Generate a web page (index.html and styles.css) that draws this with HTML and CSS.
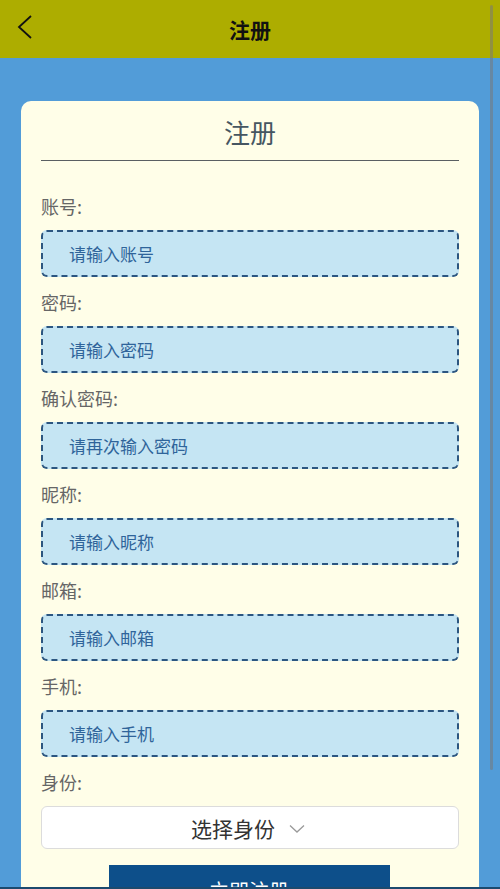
FILE: index.html
```html
<!DOCTYPE html>
<html lang="zh-CN">
<head>
<meta charset="utf-8">
<title>注册</title>
<link rel="stylesheet" href="styles.css">
</head>
<body>
<div class="page">
  <header class="topbar">
    <svg class="back" width="16" height="24" viewBox="0 0 16 24"><path d="M14 1 L2 12 L14 23" fill="none" stroke="#111" stroke-width="1.8" stroke-linejoin="miter"/></svg>
    <h1 class="topbar-title">注册</h1>
  </header>
  <main class="content">
    <section class="card">
      <h2 class="card-title">注册</h2>
      <form class="form">
        <div class="field"><label class="label">账号:</label><div class="input">请输入账号</div></div>
        <div class="field"><label class="label">密码:</label><div class="input">请输入密码</div></div>
        <div class="field"><label class="label">确认密码:</label><div class="input">请再次输入密码</div></div>
        <div class="field"><label class="label">昵称:</label><div class="input">请输入昵称</div></div>
        <div class="field"><label class="label">邮箱:</label><div class="input">请输入邮箱</div></div>
        <div class="field"><label class="label">手机:</label><div class="input">请输入手机</div></div>
        <div class="field field-last"><label class="label">身份:</label>
          <div class="select"><span>选择身份</span>
            <svg class="chev" width="16" height="10" viewBox="0 0 16 10"><path d="M1 1.5 L8 8 L15 1.5" fill="none" stroke="#9a9a9a" stroke-width="1.3"/></svg>
          </div>
        </div>
        <div class="btn-row"><div class="btn">立即注册</div></div>
      </form>
    </section>
  </main>
  <div class="scroll-ind"></div>
  <div class="bottom-line"></div>
</div>
</body>
</html>
```
FILE: styles.css
```css
html, body {
  margin: 0;
  padding: 0;
  height: 100%;
  overflow: hidden;
}
body {
  background: #529cd8;
  font-family: "Noto Sans CJK SC", "Noto Sans", sans-serif;
}
.page {
  position: relative;
  height: 889px;
  overflow: hidden;
}
.topbar {
  height: 58px;
  background: #adad00;
  display: flex;
  align-items: center;
  justify-content: center;
  position: relative;
}
.back {
  position: absolute;
  left: 17px;
  top: 15px;
}
.topbar-title {
  margin: 0;
  font-size: 21px;
  font-weight: 700;
  color: #111;
  line-height: 58px;
}
.content {
  padding: 43px 21px 0 21px;
}
.card {
  background: #fffee8;
  border-radius: 10px;
  padding: 14px 20px 20px 20px;
}
.card-title {
  margin: 0;
  font-size: 26px;
  font-weight: 400;
  color: #465661;
  text-align: center;
  line-height: 34px;
  padding-bottom: 11px;
  border-bottom: 1px solid #5a5f62;
}
.form {
  margin: 0;
  padding-top: 33px;
  display: flex;
  flex-direction: column;
}
.field {
  display: flex;
  flex-direction: column;
  gap: 12px;
  margin-bottom: 13px;
}
.field-last {
  gap: 12px;
  margin-bottom: 16px;
}
.label {
  font-size: 18px;
  line-height: 24px;
  color: #666666;
}
.input {
  height: 43px;
  border: 2px dashed #2c5680;
  border-radius: 6px;
  background: #c5e5f3;
  box-sizing: content-box;
  padding-left: 26px;
  font-size: 17px;
  line-height: 43px;
  color: #2f649a;
}
.select {
  height: 41px;
  border: 1px solid #dcdcdc;
  border-radius: 6px;
  background: #ffffff;
  display: flex;
  align-items: center;
  justify-content: center;
  gap: 14px;
  font-size: 21px;
  color: #333;
  padding-right: 4px;
}
.chev {
  margin-top: 2px;
}
.btn-row {
  display: flex;
  justify-content: center;
}
.btn {
  width: 281px;
  height: 52px;
  background: #0d4f8a;
  color: #fff;
  font-size: 20px;
  line-height: 52px;
  text-align: center;
  margin-right: 2px;
}
.scroll-ind {
  position: absolute;
  right: 7px;
  top: 5px;
  width: 3px;
  height: 765px;
  background: rgba(120, 120, 120, 0.55);
  border-radius: 2px;
}
.bottom-line {
  position: absolute;
  left: 0;
  right: 0;
  bottom: 0;
  height: 2px;
  background: #1c4a6e;
}
```
